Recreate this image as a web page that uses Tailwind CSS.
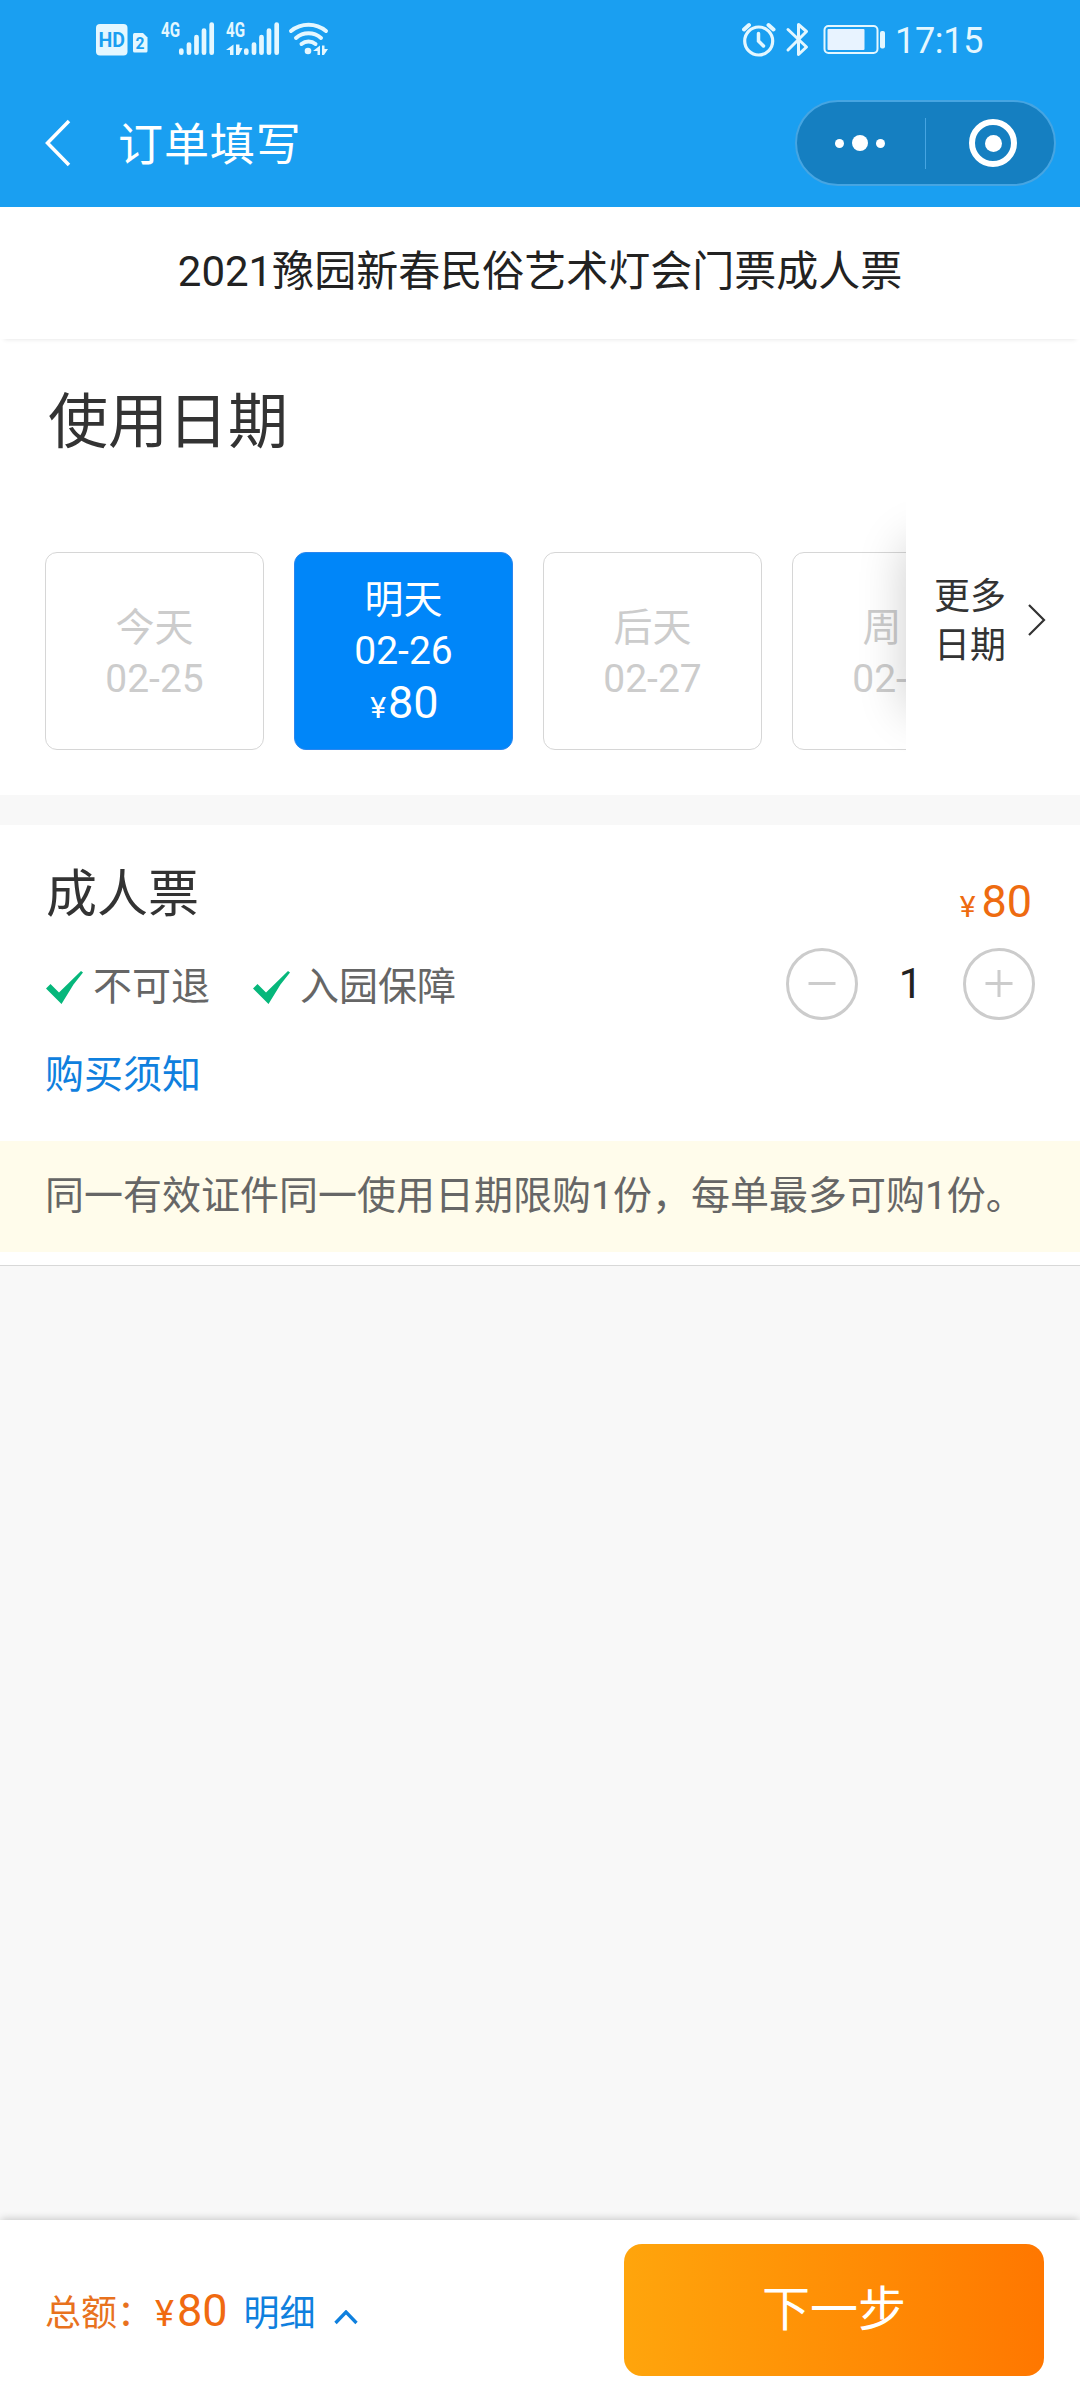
<!DOCTYPE html>
<html lang="zh-CN">
<head>
<meta charset="utf-8">
<title>订单填写</title>
<script src="https://cdn.jsdelivr.net/npm/@tailwindcss/browser@4"></script>
</head>
<body class="w-[1080px] h-[2400px] overflow-hidden flex flex-col bg-[#f8f8f8] font-[Roboto,'Noto_Sans_CJK_SC',sans-serif] text-[#333]">
  <header class="h-[207px] shrink-0 bg-[#1a9ff1] flex flex-col">
    <!-- status bar -->
    <div class="h-20 flex items-center justify-between pl-[96px] pr-[96px] text-[#e4f7ff]">
      <svg width="234" height="80" viewBox="96 0 234 80" fill="currentColor" font-family="Roboto" font-weight="700">
        <rect x="96" y="24" width="31.500" height="31.500" rx="4"/>
        <text x="98.500" y="46.500" font-size="19.500" textLength="26.500" lengthAdjust="spacingAndGlyphs" fill="#1a9ff1">HD</text>
        <path d="M134.500 33H143l4.500 4.500V51a1.500 1.500 0 0 1-1.500 1.500h-11.500a1.500 1.500 0 0 1-1.500-1.500V34.500a1.500 1.500 0 0 1 1.500-1.500z"/>
        <text x="135.500" y="49" font-size="16" textLength="9" lengthAdjust="spacingAndGlyphs" fill="#1a9ff1">2</text>
        <text x="161" y="37" font-size="20" textLength="19" lengthAdjust="spacingAndGlyphs">4G</text>
        <text x="226" y="37" font-size="20" textLength="19" lengthAdjust="spacingAndGlyphs">4G</text>
        <g stroke="currentColor" stroke-width="4.700" stroke-linecap="round">
          <path d="M181.300 50.500v2.200M189 44.500v8.200M196.500 37v15.700M204 30.500v22.200M211.700 24.500v28.200"/>
          <path d="M246.300 50.500v2.200M254 44.500v8.200M261.500 37v15.700M269 30.500v22.200M276.700 24.500v28.200"/>
        </g>
        <path d="M233.500 44.500V55h-3.500v-5h-4zM236 44.500h3.500v3.500h3l-3.500 7h-3z"/>
        <g fill="none" stroke="currentColor" stroke-width="4" stroke-linecap="round">
          <path d="M291 31a27.500 27.500 0 0 1 35 0"/>
          <path d="M296 38a19 19 0 0 1 25 0"/>
          <path d="M301.500 44a11 11 0 0 1 14 0"/>
        </g>
        <circle cx="308" cy="51" r="3.300"/>
        <path d="M320 45.500V55h-2.500v-4H313zM322 45.500h2.500V49h3.500l-4 6h-2z"/>
      </svg>
      <div class="flex items-center">
        <svg width="153" height="80" viewBox="742 0 153 80" fill="none" stroke="currentColor">
          <circle cx="758.700" cy="41" r="14" stroke-width="3.200"/>
          <path d="M758.500 33.500v7.500l5 5" stroke-width="3.500" stroke-linecap="round"/>
          <path d="M744 29.500l5-4.500M768.500 25l5 4.500" stroke-width="4" stroke-linecap="round"/>
          <path d="M788 29.500L806.500 47l-8 7.500V24.500l8 7L788 50" stroke-width="3" stroke-linecap="round" stroke-linejoin="round"/>
          <rect x="824.500" y="26" width="53" height="27" rx="4" stroke-width="2"/>
          <rect x="827.500" y="29" width="37" height="21" rx="1" fill="#e8f3ff" stroke="none"/>
          <rect x="880" y="31" width="5" height="17.500" rx="2" fill="currentColor" stroke="none"/>
        </svg>
        <span class="text-[36px] pt-px leading-[80px] w-[89px] whitespace-nowrap tracking-[-0.3px]">17:15</span>
      </div>
    </div>
    <!-- navigation bar -->
    <div class="h-[127px] flex items-center justify-between pl-[44px] pr-6 pb-px text-white">
      <div class="flex items-center gap-[46px]">
        <svg class="w-7 h-12" viewBox="0 0 28 48" fill="none" stroke="currentColor" stroke-width="3.500"><path d="M25 2L3.500 24 25 46"/></svg>
        <h1 class="text-[45px] leading-[60px] pt-[5px] tracking-[0.9px]">订单填写</h1>
      </div>
      <div class="w-[261px] h-[86px] rounded-full bg-[#157fc1] border-2 border-[#46a5e2] flex items-center">
        <div class="w-[128px] pr-[2px] flex items-center justify-center gap-2">
          <i class="size-[9px] rounded-full bg-white"></i><i class="size-4 rounded-full bg-white"></i><i class="size-[9px] rounded-full bg-white"></i>
        </div>
        <div class="w-px h-[51px] bg-[#46a5e2]"></div>
        <div class="flex-1 flex justify-center pl-[6px]">
          <div class="size-12 rounded-full border-[6px] border-white flex items-center justify-center"><i class="size-[17px] rounded-full bg-white"></i></div>
        </div>
      </div>
    </div>
  </header>

  <main class="flex-1 flex flex-col">
    <div class="h-[132px] shrink-0 bg-white flex items-center justify-center pb-1 text-[42px] text-[#222] relative z-10 shadow-[0_4px_5px_-4px_rgba(0,0,0,0.12)]">2021豫园新春民俗艺术灯会门票成人票</div>

    <section class="h-[456px] shrink-0 bg-white flex flex-col">
      <h2 class="h-[162px] pl-12 text-[60px] leading-[168px]">使用日期</h2>
      <div class="h-[294px] flex">
        <div class="w-[906px] relative overflow-hidden flex gap-[30px] pl-[45px] pt-[51px] text-[39px] leading-[51px] text-center text-[#ccc]">
          <div class="w-[219px] h-[198px] shrink-0 rounded-xl border border-[#d6d6d6] flex flex-col justify-center pt-[6px]"><span>今天</span><span>02-25</span></div>
          <div class="w-[219px] h-[198px] shrink-0 rounded-xl border border-[#2b86ee] bg-[#0086f9] text-white flex flex-col justify-center pt-[6px]"><span>明天</span><span>02-26</span><span class="text-[45px] pl-[2px]"><span class="text-[30px] mr-[2px]">¥</span>80</span></div>
          <div class="w-[219px] h-[198px] shrink-0 rounded-xl border border-[#d6d6d6] flex flex-col justify-center pt-[6px]"><span>后天</span><span>02-27</span></div>
          <div class="w-[219px] h-[198px] shrink-0 rounded-xl border border-[#d6d6d6] flex flex-col justify-center pt-[6px]"><span>周日</span><span>02-28</span></div>
          <div class="absolute left-[906px] top-[42px] w-[174px] h-[168px] shadow-[0_0_45px_rgba(0,0,0,0.2)]"></div>
        </div>
        <div class="w-[174px] h-[238px] flex items-center pl-[28px] gap-[22px] text-[36px] leading-[49px]">
          <span class="w-[72px] pt-[3px]">更多日期</span>
          <svg class="w-5 h-8" viewBox="0 0 20 32" fill="none" stroke="#333" stroke-width="2.200"><path d="M1 1l15 15L1 31"/></svg>
        </div>
      </div>
    </section>

    <section class="mt-[30px] h-[441px] shrink-0 bg-white border-b border-[#d8d8d8] flex flex-col">
      <div class="h-[110px] pl-[46px] pr-12 flex justify-between">
        <h3 class="text-[51px] leading-[140px]">成人票</h3>
        <div class="text-[45px] leading-[153px] text-[#ee6b10]"><span class="text-[30px] mr-[6px]">¥</span>80</div>
      </div>
      <div class="h-[98px] pl-[45px] pr-[45px] flex items-center justify-between">
        <div class="flex items-center pt-[5px] text-[39px] leading-[52px] text-[#666]">
          <svg class="w-[38px] h-9 mr-[10px]" viewBox="0 0 38 36" fill="#06b77b"><path d="M1 19.500L5.500 15l8.500 8.500L36 2l2 1.500-9.500 12L16.500 35z"/></svg>不可退
          <svg class="w-[38px] h-9 ml-[42px] mr-[10px]" viewBox="0 0 38 36" fill="#06b77b"><path d="M1 19.500L5.500 15l8.500 8.500L36 2l2 1.500-9.500 12L16.500 35z"/></svg>入园保障
        </div>
        <div class="flex items-center">
          <svg class="size-[72px]" viewBox="0 0 72 72" fill="none" stroke="#ccc" stroke-width="3"><circle cx="36" cy="36" r="34.500"/><path d="M22.500 35.500h27"/></svg>
          <span class="w-[105px] text-center text-[42px] leading-[72px] text-[#222]">1</span>
          <svg class="size-[72px]" viewBox="0 0 72 72" fill="none" stroke="#ccc" stroke-width="3"><circle cx="36" cy="36" r="34.500"/><path d="M22.500 35.500h27M36 22v27"/></svg>
        </div>
      </div>
      <a class="h-[108px] pl-[45px] text-[39px] leading-[85px] text-[#0f80de]">购买须知</a>
      <p class="h-[111px] bg-[#fffceb] pl-[45px] text-[39px] leading-[111px] text-[#666] whitespace-nowrap">同一有效证件同一使用日期限购1份，每单最多可购1份。</p>
    </section>
  </main>

  <footer class="h-[180px] shrink-0 bg-white flex items-center justify-between pl-[45px] pr-9 shadow-[0_-2px_8px_-1px_rgba(0,0,0,0.2)]">
    <div class="flex items-baseline pt-[5px] text-[36px] leading-[60px] text-[#e8721e]">
      <span>总额：</span><span class="ml-[2px] text-[#f06a10] mr-[3px]">¥</span><span class="text-[45px] text-[#f06a10]">80</span>
      <span class="ml-4 text-[#0f80de]">明细</span>
      <svg class="ml-[18px] w-6 h-4" viewBox="0 0 24 16" fill="none" stroke="#0f80de" stroke-width="3.300"><path d="M1.500 13L12 2l10.500 11"/></svg>
    </div>
    <button class="w-[420px] h-[132px] rounded-[18px] bg-linear-to-r from-[#ffa50c] to-[#ff7700] text-white text-[48px]">下一步</button>
  </footer>
</body>
</html>
